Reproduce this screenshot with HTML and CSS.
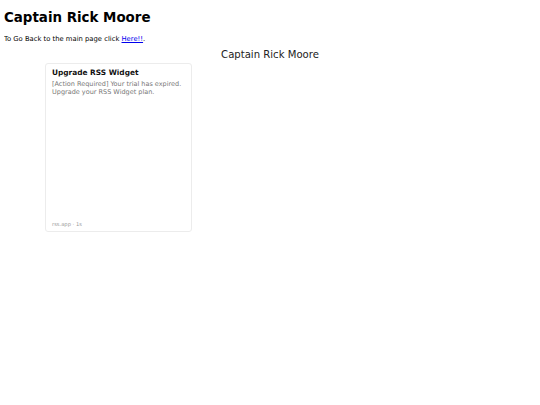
FILE: index.html
```html
<!DOCTYPE html>
<html>
<head>
<meta charset="utf-8">
<link rel="stylesheet" href="styles.css">
</head>
<body>
<h1 class="title">Captain Rick Moore</h1>
<p class="back">To Go Back to the main page click <a href="#">Here!!</a>.</p>
<h2 class="center">Captain Rick Moore</h2>
<div class="widget">
  <div class="card">
    <div class="card-body">
      <div class="card-title">Upgrade RSS Widget</div>
      <div class="card-desc">[Action Required] Your trial has expired. Upgrade your RSS Widget plan.</div>
    </div>
    <div class="card-foot">rss.app · 1s</div>
  </div>
</div>
</body>
</html>
```
FILE: styles.css
```css
body {
  margin: 4px;
  font-family: "DejaVu Sans", sans-serif;
  color: #000;
}
.title {
  font-size: 13.4px;
  font-weight: bold;
  margin: 5px 0 0 0;
  line-height: 18px;
}
.back {
  font-size: 6.8px;
  margin: 7px 0 0 0;
  line-height: 10px;
}
.back a { color: #0000ee; }
.center {
  font-size: 10.1px;
  font-weight: normal;
  text-align: center;
  margin: 4px 0 0 0;
  line-height: 14px;
  color: #222;
}
.widget {
  margin: 1px 0 0 41px;
}
.card {
  width: 147px;
  height: 169px;
  border: 1px solid #ececec;
  border-radius: 3px;
  display: flex;
  flex-direction: column;
  justify-content: space-between;
  padding: 0 6px;
  box-sizing: border-box;
}
.card-body { padding-top: 4px; }
.card-title {
  font-size: 7.4px;
  font-weight: bold;
  line-height: 10px;
  color: #111;
}
.card-desc {
  font-size: 6.5px;
  line-height: 8px;
  color: #777;
  margin-top: 2px;
}
.card-foot {
  font-size: 5.2px;
  line-height: 7px;
  color: #999;
  padding-bottom: 3px;
}
```
